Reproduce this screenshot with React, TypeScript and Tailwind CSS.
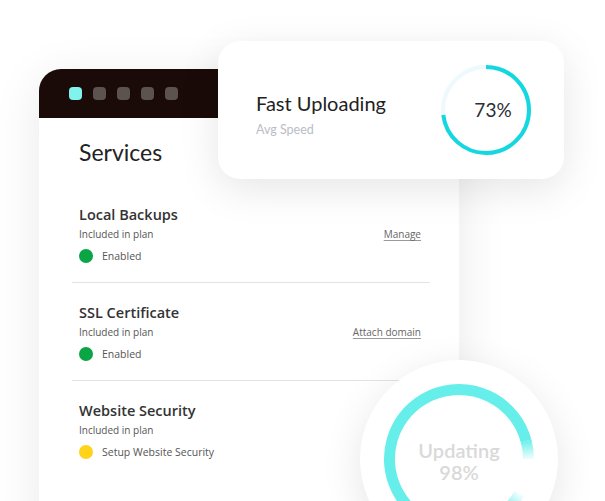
const font = { fontFamily: 'Lato, "Noto Sans", sans-serif' }
const listFont = { fontFamily: '"Open Sans", "Noto Sans", sans-serif' }

type Item = {
  title: string
  status: string
  color: string
  link?: string
}

const items: Item[] = [
  { title: 'Local Backups', status: 'Enabled', color: 'bg-[#0aa544]', link: 'Manage' },
  { title: 'SSL Certificate', status: 'Enabled', color: 'bg-[#0aa544]', link: 'Attach domain' },
  { title: 'Website Security', status: 'Setup Website Security', color: 'bg-[#fed319]' },
]

function ServiceRow({ item, last }: { item: Item; last: boolean }) {
  return (
    <div className={`pt-[20px] pb-[19px] pl-[7px] pr-[9px] ${last ? '' : 'border-b border-[#e3e3e3]'}`} style={listFont}>
      <div className="text-[14.5px] leading-[20px] font-semibold text-[#333]">{item.title}</div>
      <div className="mt-[2px] flex items-center justify-between text-[10px] leading-[14px] text-[#555]">
        <span>Included in plan</span>
        {item.link && <span className="text-[#666] underline underline-offset-2 decoration-[#999]">{item.link}</span>}
      </div>
      <div className="mt-[8px] flex items-center gap-[9px] text-[10.5px] leading-[14px] text-[#555]">
        <span className={`h-[14px] w-[14px] rounded-full ${item.color}`} />
        <span>{item.status}</span>
      </div>
    </div>
  )
}

function SpeedRing() {
  const r = 43
  const c = 2 * Math.PI * r
  return (
    <div className="relative h-[90px] w-[90px]">
      <svg width="90" height="90" viewBox="0 0 90 90" className="absolute inset-0">
        <circle cx="45" cy="45" r={r} fill="none" stroke="#eef9fd" strokeWidth="4" />
        <circle
          cx="45"
          cy="45"
          r={r}
          fill="none"
          stroke="#14d7df"
          strokeWidth="4"
          strokeDasharray={`${c * 0.73} ${c}`}
          transform="rotate(-90 45 45)"
        />
      </svg>
      <div className="absolute inset-0 flex items-center justify-center pl-[14px] text-[19px] text-[#2b2f36]">73%</div>
    </div>
  )
}

function UpdateRing() {
  return (
    <svg width="198" height="198" viewBox="0 0 198 198" className="absolute inset-0">
      <defs>
        <linearGradient id="fadeEnd" gradientUnits="userSpaceOnUse" x1="166" y1="80" x2="168" y2="99">
          <stop offset="0" stopColor="#66efea" />
          <stop offset="1" stopColor="#66efea" stopOpacity="0.1" />
        </linearGradient>
        <linearGradient id="fadeStart" gradientUnits="userSpaceOnUse" x1="159" y1="134" x2="145" y2="151">
          <stop offset="0" stopColor="#66efea" stopOpacity="0.1" />
          <stop offset="1" stopColor="#66efea" />
        </linearGradient>
      </defs>
      <path d="M145.5 150.6 A69.5 69.5 0 1 1 166.1 81" fill="none" stroke="#66efea" strokeWidth="11" />
      <path d="M166.1 81 A69.5 69.5 0 0 1 168.5 99" fill="none" stroke="url(#fadeEnd)" strokeWidth="11" />
      <path d="M159.2 133.75 A69.5 69.5 0 0 1 145.5 150.6" fill="none" stroke="url(#fadeStart)" strokeWidth="11" />
    </svg>
  )
}

export default function App() {
  return (
    <div className="relative h-[501px] w-[605px] overflow-hidden bg-white" style={font}>
      <div className="ml-[39px] mt-[69px] w-[420px] h-[460px] rounded-tl-[22px] overflow-hidden bg-white shadow-[0_10px_50px_rgba(0,0,0,0.09)]">
        <div className="flex h-[49px] items-center gap-[11px] bg-[#1a0b08] pl-[30px]">
          <span className="h-[13px] w-[13px] rounded-[4px] bg-[#7ff3ec]" />
          <span className="h-[13px] w-[13px] rounded-[4px] bg-[#5c5351]" />
          <span className="h-[13px] w-[13px] rounded-[4px] bg-[#5c5351]" />
          <span className="h-[13px] w-[13px] rounded-[4px] bg-[#5c5351]" />
          <span className="h-[13px] w-[13px] rounded-[4px] bg-[#5c5351]" />
        </div>
        <div className="mt-[20px] pl-[40px] text-[23px] leading-[28px] text-[#222]">Services</div>
        <div className="mt-[19px] pl-[33px] pr-[29px]">
          {items.map((it, i) => (
            <ServiceRow key={it.title} item={it} last={i === items.length - 1} />
          ))}
        </div>
      </div>

      <div className="absolute left-[218px] top-[41px] flex h-[138px] w-[346px] items-center justify-between rounded-[22px] bg-white pl-[38px] pr-[33px] shadow-[0_10px_40px_rgba(0,0,0,0.1)]">
        <div className="mt-[8px]">
          <div className="text-[20px] leading-[24px] text-[#222]">Fast Uploading</div>
          <div className="mt-[7px] text-[12.5px] leading-[16px] text-[#b9bdc6]">Avg Speed</div>
        </div>
        <SpeedRing />
      </div>

      <div className="absolute left-[360px] top-[360px] h-[198px] w-[198px] rounded-full bg-white shadow-[0_10px_40px_rgba(0,0,0,0.1)]">
        <UpdateRing />
        <div className="absolute inset-0 flex flex-col items-center justify-center pt-[4px] text-[20px] leading-[22px] font-semibold text-[#d9d9d9]">
          <span>Updating</span>
          <span>98%</span>
        </div>
      </div>
    </div>
  )
}
